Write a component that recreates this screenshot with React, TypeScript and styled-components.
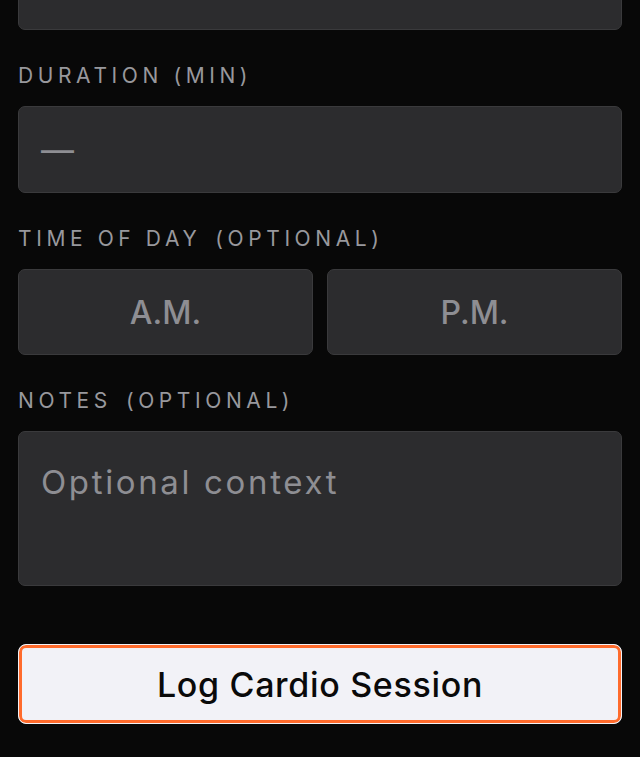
import styled, { createGlobalStyle } from "styled-components";

const GlobalStyle = createGlobalStyle`
  html, body {
    margin: 0;
    padding: 0;
    background: #080808;
    overflow: hidden;
  }
  * {
    box-sizing: border-box;
  }
`;

const font = `"Inter", "DejaVu Sans", sans-serif`;

export default function App() {
  return (
    <>
      <GlobalStyle />
      <Page>
        <Form>
          <Field>
            <Input />
          </Field>
          <Field>
            <Label>Duration (min)</Label>
            <Input>
              <Placeholder>—</Placeholder>
            </Input>
          </Field>
          <Field>
            <Label>
              Time of day<Optional>(optional)</Optional>
            </Label>
            <ToggleRow>
              <Toggle>A.M.</Toggle>
              <Toggle>P.M.</Toggle>
            </ToggleRow>
          </Field>
          <Field>
            <Label>
              Notes<Optional>(optional)</Optional>
            </Label>
            <TextArea>
              <Placeholder>Optional context</Placeholder>
            </TextArea>
          </Field>
          <SubmitButton>Log Cardio Session</SubmitButton>
        </Form>
      </Page>
    </>
  );
}

const Page = styled.div`
  min-height: 100vh;
  background: #080808;
  padding: 0 18px;
  font-family: ${font};
`;

const Form = styled.div`
  display: flex;
  flex-direction: column;
  gap: 32px;
  margin-top: -57px;
`;

const Field = styled.div`
  display: flex;
  flex-direction: column;
  gap: 16px;
`;

const Label = styled.div`
  color: #98989d;
  font-size: 21px;
  line-height: 28px;
  font-weight: 400;
  letter-spacing: 4.6px;
  text-transform: uppercase;
`;

const Optional = styled.span`
  margin-left: 14px;
`;

const Box = styled.div`
  background: #2c2c2e;
  border: 1.5px solid #3a3a3c;
  border-radius: 7px;
`;

const Input = styled(Box)`
  height: 87px;
  display: flex;
  align-items: center;
  padding: 0 22px;
`;

const TextArea = styled(Box)`
  height: 155px;
  padding: 30px 22px;
`;

const Placeholder = styled.span`
  color: #8e8e93;
  font-size: 33px;
  line-height: 40px;
  font-weight: 400;
  letter-spacing: 0.08em;
`;

const ToggleRow = styled.div`
  display: grid;
  grid-template-columns: 1fr 1fr;
  gap: 14px;
`;

const Toggle = styled(Box)`
  height: 86px;
  display: flex;
  align-items: center;
  justify-content: center;
  color: #8e8e93;
  font-size: 32px;
  font-weight: 500;
`;

const SubmitButton = styled.button`
  margin-top: 26px;
  height: 80px;
  width: 100%;
  background: #f2f2f7;
  border: 1px solid #f2f2f7;
  border-radius: 8px;
  box-shadow: inset 0 0 0 3px #ff6b2c;
  color: #0a0a0a;
  font-family: ${font};
  font-size: 34px;
  font-weight: 500;
  letter-spacing: 0.02em;
  cursor: pointer;
`;
